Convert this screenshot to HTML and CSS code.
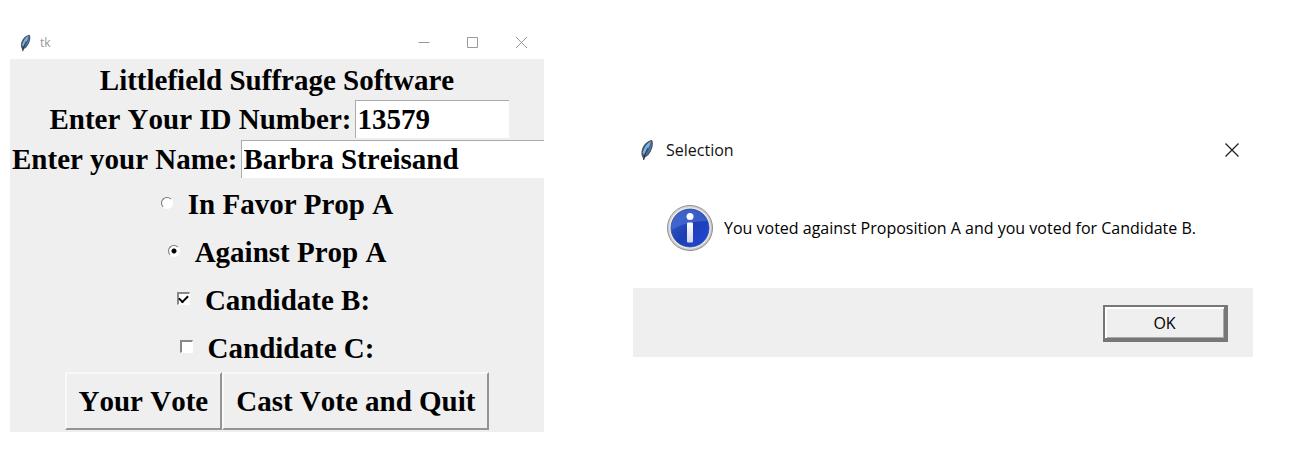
FILE: index.html
```html
<!DOCTYPE html>
<html lang="en">
<head>
<meta charset="utf-8">
<title>tk</title>
<link rel="stylesheet" href="styles.css">
</head>
<body>
<svg class="defs" width="0" height="0" aria-hidden="true">
  <symbol id="feather" viewBox="0 0 12 20">
    <path d="M10.500 .8C7 1.200 3.200 4.500 1.500 9C.6 12 .8 15 2 16.500L3 19.500L4 16.800C7.500 15.500 10 11 11 7C11.500 4.500 11.500 2 10.500 .8Z" fill="#4a525a"/>
    <path d="M9.600 2C6.500 3.500 3.500 7 2.200 12L3 14.500C6 11 8.800 6.500 9.600 2Z" fill="#79b2ea"/>
    <path d="M10.400 2.200C9 7.500 6.500 12 3.600 15.500C7.500 14 10.600 8.500 10.400 2.200Z" fill="#3f7cc6"/>
    <path d="M7 8C5.500 10.500 3.800 14 3 19" fill="none" stroke="#1c2833" stroke-width=".8"/>
  </symbol>
</svg>
<main class="desktop">
  <section class="window">
    <header class="titlebar titlebar-main">
      <svg class="feather"><use href="#feather"/></svg>
      <span class="caption">tk</span>
      <button class="control" aria-label="Minimize"><svg width="14" height="14"><path d="M1.500 6.500H12.500"/></svg></button>
      <button class="control" aria-label="Maximize"><svg width="14" height="14"><path d="M1.500 1.500H11.500V11.500H1.500Z"/></svg></button>
      <button class="control" aria-label="Close"><svg width="14" height="14"><path d="M1 1L12 12M12 1L1 12"/></svg></button>
    </header>
    <form class="ballot">
      <h1 class="heading">Littlefield Suffrage Software</h1>
      <div class="field">
        <label for="voter-id">Enter Your ID Number:</label>
        <input class="entry entry-id" id="voter-id" type="text" value="13579">
      </div>
      <div class="field field-name">
        <label for="voter-name">Enter your Name:</label>
        <input class="entry entry-name" id="voter-name" type="text" value="Barbra Streisand">
      </div>
      <div class="choices">
        <label class="choice"><input class="radio" type="radio" name="prop">In Favor Prop A</label>
        <label class="choice"><input class="radio" type="radio" name="prop" checked>Against Prop A</label>
        <label class="choice choice-b"><input class="check" type="checkbox" checked>Candidate B:</label>
        <label class="choice"><input class="check" type="checkbox">Candidate C:</label>
      </div>
      <div class="actions">
        <button class="action" type="button">Your Vote</button>
        <button class="action" type="button">Cast Vote and Quit</button>
      </div>
    </form>
  </section>
  <section class="dialog" role="dialog" aria-labelledby="dialog-title">
    <header class="titlebar titlebar-dialog">
      <svg class="feather feather-large"><use href="#feather"/></svg>
      <span class="caption" id="dialog-title">Selection</span>
      <button class="control control-dark" aria-label="Close"><svg width="16" height="16"><path d="M1.500 1.500L14.500 14.500M14.500 1.500L1.500 14.500"/></svg></button>
    </header>
    <div class="message">
      <svg class="info" viewBox="0 0 48 48" aria-hidden="true">
        <defs>
          <linearGradient id="rim" x1="0" y1="0" x2="1" y2="1"><stop offset="0" stop-color="#dcdcdc"/><stop offset="1" stop-color="#c4c4c4"/></linearGradient>
          <linearGradient id="disc" x1="0" y1="0" x2="1" y2="1"><stop offset="0" stop-color="#3f63c4"/><stop offset=".5" stop-color="#1c3fb4"/><stop offset="1" stop-color="#2446dc"/></linearGradient>
          <linearGradient id="gloss" x1="0" y1="0" x2="0" y2="1"><stop offset="0" stop-color="#4468c6"/><stop offset="1" stop-color="#4b74e0"/></linearGradient>
          <linearGradient id="stem" x1="0" y1="0" x2="0" y2="1"><stop offset="0" stop-color="#fff"/><stop offset="1" stop-color="#d4d8e4"/></linearGradient>
        </defs>
        <circle cx="24" cy="24" r="22.500" fill="url(#rim)" stroke="#8d8d8d"/>
        <circle cx="24" cy="24" r="20.500" fill="#f2f2f2"/>
        <circle cx="24" cy="24" r="19" fill="url(#disc)" stroke="#27459c" stroke-width=".8"/>
        <path d="M5.500 26A18.500 18.500 0 0 1 41 17C29 17 15 20 5.500 26Z" fill="url(#gloss)" opacity=".65"/>
        <circle cx="24" cy="12.500" r="3.500" fill="#fff"/>
        <rect x="21" y="18.500" width="6" height="20" rx="1" fill="url(#stem)"/>
      </svg>
      <p class="message-text">You voted against Proposition A and you voted for Candidate B.</p>
    </div>
    <footer class="dialog-footer"><button class="ok" type="button">OK</button></footer>
  </section>
</main>
</body>
</html>
```
FILE: styles.css
```css
* { box-sizing: border-box; }

body {
  margin: 0;
  background: #fff;
  color: #000;
  font-family: "Open Sans", "Noto Sans", sans-serif;
  font-kerning: none;
}

button { font: inherit; color: inherit; font-kerning: none; }

.defs { position: absolute; }

.desktop {
  display: grid;
  grid-template-columns: 534fr 620fr;
  column-gap: 89px;
  align-items: start;
  padding: 26px 39px 0 10px;
}

.window { min-width: 0; }

.titlebar { display: flex; align-items: center; }
.titlebar-main { height: 33px; padding: 0 14px 0 10px; gap: 33px; font-size: 12px; color: #999; }
.titlebar-dialog { height: 38px; padding: 0 13px 0 7px; gap: 12px; font-size: 16px; color: #111; }
.titlebar-main .feather { margin-right: -24px; }
.caption { flex: 1; }

.feather { width: 11px; height: 18px; flex: none; }
.feather-large { width: 14px; height: 22px; }

.control { display: flex; padding: 0; border: 0; background: none; }
.control svg { fill: none; stroke: #999; stroke-width: 1; }
.control-dark svg { stroke: #222; stroke-width: 1.3; }

.titlebar-main .control { width: 16px; justify-content: center; }

.ballot {
  padding: 2px 0;
  background: #efefef;
  overflow: hidden;
  font: bold 29px/38px "Liberation Serif", serif;
  font-kerning: none;
}

.heading { margin: 0; font: inherit; font-kerning: none; text-align: center; }

.field { display: flex; justify-content: center; gap: 3px; margin-bottom: 2px; white-space: nowrap; }
.heading + .field { margin-top: 1px; padding-left: 4px; }
.field-name { justify-content: flex-start; padding-left: 2px; }

.entry {
  height: 38px;
  min-width: 0;
  padding: 0 2px 1px;
  border: 0 solid #aaa;
  border-width: 1px 0 0 1px;
  border-radius: 0;
  background: #fff;
  color: inherit;
  font: inherit;
  font-kerning: none;
  outline: none;
}
.entry-id { width: 154px; }
.entry-name { flex: 1; }

.choices { display: flex; flex-direction: column; align-items: center; }
.choice { display: flex; align-items: center; gap: 15px; height: 48px; }
.choice-b { padding-right: 7px; }

.radio, .check {
  appearance: none;
  width: 13px;
  height: 13px;
  margin: 0 0 3px;
  border: 1px solid;
  border-color: #777 #fff #fff #777;
  background: #fff;
}
.radio { border-radius: 50%; width: 12px; height: 12px; }
.radio:checked { background: radial-gradient(circle, #000 2px, #fff 3px); }
.check { display: grid; place-items: center; border-color: #888 #fff #fff #888; border-width: 2px 1px 1px 2px; }
.check:checked::before {
  content: "";
  width: 7px;
  height: 4px;
  margin-bottom: 2px;
  border: solid #000;
  border-width: 0 0 2px 2px;
  transform: rotate(-45deg);
}

.actions { display: flex; justify-content: center; }
.action {
  height: 58px;
  padding: 0 12px;
  border: 2px solid;
  border-color: #f8f8f8 #949494 #949494 #f8f8f8;
  background: #efefef;
}

.dialog { margin-top: 105px; min-width: 0; }
.message { display: flex; align-items: center; gap: 10px; height: 119px; padding: 0 33px 2px; }
.info { width: 48px; height: 48px; flex: none; }
.message-text { margin: 0; font-size: 16px; white-space: nowrap; }

.dialog-footer { display: flex; justify-content: flex-end; padding: 17px 25px 15px; background: #efefef; }
.ok {
  width: 125px;
  height: 37px;
  padding: 0;
  border: 2px solid #777;
  border-width: 2px 4px 4px 2px;
  background: #efefef;
  box-shadow: inset 2px 2px #fff, inset -1px -1px #aaa;
  font-size: 16px;
}
```
